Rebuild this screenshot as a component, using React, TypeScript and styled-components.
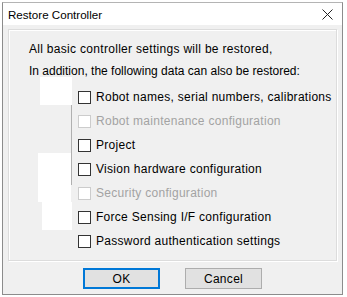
import React from "react";
import styled, { createGlobalStyle } from "styled-components";

const Global = createGlobalStyle`
  html, body { margin: 0; padding: 0; background: #ffffff; }
  body { font-family: "Liberation Sans", Arial, sans-serif; }
`;

const Window = styled.div`
  position: relative;
  margin: 2px 0 0 2px;
  width: 341px;
  height: 293px;
  border: 1px solid #8c8c8c;
  border-top-color: #b4b4b4;
  background: #f0f0f0;
  display: flex;
  flex-direction: column;
  box-sizing: border-box;
`;

const TitleBar = styled.div`
  height: 22px;
  background: #ffffff;
  display: flex;
  align-items: center;
  justify-content: space-between;
  padding: 0 0 0 5px;
  flex-shrink: 0;
`;

const Title = styled.span`
  font-size: 11.6px;
  color: #000;
`;

const Close = styled.div`
  width: 30px;
  height: 22px;
  display: flex;
  align-items: center;
  justify-content: center;
  margin-right: 0px;
`;

const Body = styled.div`
  flex: 1;
  display: flex;
  flex-direction: column;
  padding: 4px 5px 0 5px;
`;

const Group = styled.div`
  position: relative;
  height: 232px;
  border: 1px solid #dcdcdc;
  box-shadow: inset 1px 1px 0 #ffffff, 1px 1px 0 #ffffff;
  display: flex;
  flex-direction: column;
  padding: 8px 0 0 20px;
  box-sizing: border-box;
`;

const Line = styled.div<{ $spacing?: number }>`
  font-size: 12px;
  height: 22px;
  line-height: 22px;
  color: #000;
  letter-spacing: ${(p) => p.$spacing ?? 0}px;
`;

const List = styled.div`
  display: flex;
  flex-direction: column;
  margin: 3px 0 0 49px;
`;

const Row = styled.div<{ $disabled?: boolean }>`
  height: 24px;
  display: flex;
  align-items: center;
  gap: 5px;
  font-size: 12px;
  letter-spacing: 0.28px;
  color: ${(p) => (p.$disabled ? "#a3a3a3" : "#000")};
`;

const Box = styled.span<{ $disabled?: boolean }>`
  width: 13px;
  height: 13px;
  box-sizing: border-box;
  border: 1px solid ${(p) => (p.$disabled ? "#cccccc" : "#333333")};
  background: #ffffff;
  flex-shrink: 0;
`;

const Buttons = styled.div`
  display: flex;
  gap: 25px;
  margin: 7px 0 0 75px;
`;

const Button = styled.div<{ $primary?: boolean }>`
  width: 77px;
  height: 21px;
  box-sizing: border-box;
  background: #e1e1e1;
  border: ${(p) => (p.$primary ? "2px solid #0078d7" : "1px solid #adadad")};
  display: flex;
  align-items: center;
  justify-content: center;
  font-size: 12px;
  letter-spacing: 0.3px;
  color: #000;
`;

const Patch = styled.div`
  position: absolute;
  background: #ffffff;
`;

const VLine = styled.div`
  position: absolute;
  width: 1px;
  background: #b0b0b0;
`;

const items: { label: string; disabled?: boolean }[] = [
  { label: "Robot names, serial numbers, calibrations" },
  { label: "Robot maintenance configuration", disabled: true },
  { label: "Project" },
  { label: "Vision hardware configuration" },
  { label: "Security configuration", disabled: true },
  { label: "Force Sensing I/F configuration" },
  { label: "Password authentication settings" },
];

export default function App() {
  return (
    <>
      <Global />
      <Window>
        <TitleBar>
          <Title>Restore Controller</Title>
          <Close>
            <svg width="11" height="11" viewBox="0 0 11 11">
              <path d="M0.5 0.5 L10.5 10.5 M10.5 0.5 L0.5 10.5" stroke="#222" strokeWidth="1" />
            </svg>
          </Close>
        </TitleBar>
        <Body>
          <Group>
            <Line $spacing={0.3}>All basic controller settings will be restored,</Line>
            <Line>In addition, the following data can also be restored:</Line>
            <List>
              {items.map((it) => (
                <Row key={it.label} $disabled={it.disabled}>
                  <Box $disabled={it.disabled} />
                  {it.label}
                </Row>
              ))}
            </List>
            <Patch style={{ left: 31, top: 47, width: 32, height: 28 }} />
            <VLine style={{ left: 62, top: 75, height: 80 }} />
            <Patch style={{ left: 29, top: 123, width: 33, height: 49 }} />
            <Patch style={{ left: 33, top: 172, width: 30, height: 28 }} />
          </Group>
          <Buttons>
            <Button $primary>OK</Button>
            <Button>Cancel</Button>
          </Buttons>
        </Body>
      </Window>
    </>
  );
}
